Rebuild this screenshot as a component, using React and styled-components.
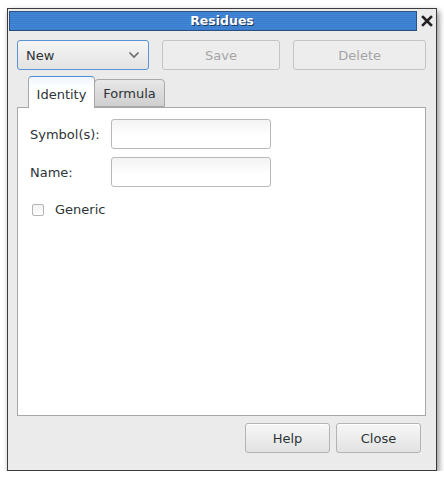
import React from "react";
import styled, { createGlobalStyle } from "styled-components";

const Global = createGlobalStyle`
  html, body {
    margin: 0;
    background: #ffffff;
  }
  body {
    font-family: "DejaVu Sans", "Noto Sans", sans-serif;
    font-size: 13px;
    color: #2e3436;
  }
`;

const Window = styled.div`
  margin: 8px 0 0 7px;
  width: 428px;
  height: 461px;
  border: 1px solid #3c3c3c;
  background: #ebebeb;
  box-shadow: 2px 3px 6px rgba(0, 0, 0, 0.45);
  display: flex;
  flex-direction: column;
`;

const TitleRow = styled.div`
  box-sizing: border-box;
  display: flex;
  align-items: center;
  padding: 1px 0 0 1px;
  height: 22px;
`;

const TitleBar = styled.div`
  box-sizing: border-box;
  width: 408px;
  height: 20px;
  border: 1px solid #2b4f7e;
  background: repeating-linear-gradient(
    to bottom,
    #4287d8 0px,
    #4287d8 1px,
    #3a7bca 1px,
    #3a7bca 2px
  );
  color: #ffffff;
  font-weight: bold;
  font-size: 12.5px;
  display: flex;
  align-items: center;
  justify-content: center;
  padding-left: 18px;
  text-shadow: 1px 1px 0 #1d3556;
`;

const CloseX = styled.div`
  width: 12px;
  height: 12px;
  margin-left: 4px;
  display: flex;
`;

const Body = styled.div`
  flex: 1;
  display: flex;
  flex-direction: column;
  padding: 9px 10px 17px 9px;
`;

const Toolbar = styled.div`
  display: flex;
  gap: 13px;
  height: 30px;
`;

const Button = styled.button`
  box-sizing: border-box;
  width: ${(p) => p.$w}px;
  height: 30px;
  border: 1px solid ${(p) => (p.$disabled ? "#c4c4c2" : "#b3b3b0")};
  border-radius: 3px;
  background: ${(p) =>
    p.$disabled ? "#ededed" : "linear-gradient(#f7f7f7, #e2e2e2)"};
  color: ${(p) => (p.$disabled ? "#a5a5a5" : "#2e3436")};
  font-family: "DejaVu Sans", sans-serif;
  font-size: 13px;
  padding: 0;
  box-shadow: ${(p) => (p.$disabled ? "none" : "inset 0 1px 0 #ffffff")};
`;

const Combo = styled.div`
  box-sizing: border-box;
  width: 132px;
  height: 30px;
  border: 1px solid #5a93d6;
  border-radius: 3px;
  background: linear-gradient(#f6f6f6, #e3e3e3);
  display: flex;
  align-items: center;
  justify-content: space-between;
  padding: 0 8px 0 8px;
`;

const Tabs = styled.div`
  display: flex;
  align-items: flex-end;
  margin: 6px 0 0 11px;
  height: 31px;
  position: relative;
  z-index: 1;
`;

const Tab = styled.div`
  box-sizing: border-box;
  height: ${(p) => (p.$active ? 32 : 28)}px;
  margin-bottom: ${(p) => (p.$active ? -1 : 0)}px;
  width: ${(p) => p.$w}px;
  border: 1px solid #a8a8a8;
  border-bottom: ${(p) => (p.$active ? "none" : "1px solid #a8a8a8")};
  border-top: 1px solid ${(p) => (p.$active ? "#4a90d9" : "#a8a8a8")};
  border-radius: 4px 4px 0 0;
  background: ${(p) =>
    p.$active ? "linear-gradient(#f0f6fc, #ffffff 40%)" : "linear-gradient(#e8e8e8, #cfcfcf)"};
  display: flex;
  align-items: center;
  justify-content: center;
  padding-top: ${(p) => (p.$active ? 3 : 0)}px;
  margin-left: ${(p) => (p.$active ? 0 : -1)}px;
`;

const Panel = styled.div`
  flex: 1;
  box-sizing: border-box;
  border: 1px solid #a8a8a8;
  background: #ffffff;
  padding: 11px 12px;
  display: flex;
  flex-direction: column;
  gap: 8px;
`;

const FieldRow = styled.div`
  display: flex;
  align-items: center;
`;

const Label = styled.div`
  width: 81px;
`;

const Input = styled.div`
  box-sizing: border-box;
  width: 160px;
  height: 30px;
  border: 1px solid #b8b8b6;
  border-radius: 3px;
  background: linear-gradient(#f3f3f3, #ffffff 60%);
`;

const CheckRow = styled.div`
  display: flex;
  align-items: center;
  margin-top: 7px;
  padding-left: 2px;
`;

const Box = styled.div`
  box-sizing: border-box;
  width: 12px;
  height: 12px;
  border: 1px solid #b4b4b4;
  border-radius: 2px;
  background: linear-gradient(#f2f2f2, #ffffff);
  margin-right: 11px;
`;

const Footer = styled.div`
  display: flex;
  justify-content: flex-end;
  gap: 6px;
  margin-top: 7px;
  padding-right: 5px;
`;

export default function App() {
  return (
    <>
      <Global />
      <Window>
        <TitleRow>
          <TitleBar>Residues</TitleBar>
          <CloseX>
            <svg width="12" height="12" viewBox="0 0 12 12">
              <path d="M2 2 L10 10 M10 2 L2 10" stroke="#222" strokeWidth="2.6" strokeLinecap="square" />
            </svg>
          </CloseX>
        </TitleRow>
        <Body>
          <Toolbar>
            <Combo>
              <span>New</span>
              <svg width="12" height="8" viewBox="0 0 12 8">
                <path d="M1.5 1.5 L6 6 L10.5 1.5" fill="none" stroke="#6a6a6a" strokeWidth="1.6" />
              </svg>
            </Combo>
            <Button $w={119} $disabled>Save</Button>
            <Button $w={133} $disabled>Delete</Button>
          </Toolbar>
          <Tabs>
            <Tab $active $w={67}>Identity</Tab>
            <Tab $w={71}>Formula</Tab>
          </Tabs>
          <Panel>
            <FieldRow>
              <Label>Symbol(s):</Label>
              <Input />
            </FieldRow>
            <FieldRow>
              <Label>Name:</Label>
              <Input />
            </FieldRow>
            <CheckRow>
              <Box />
              <span>Generic</span>
            </CheckRow>
          </Panel>
          <Footer>
            <Button $w={85}>Help</Button>
            <Button $w={85}>Close</Button>
          </Footer>
        </Body>
      </Window>
    </>
  );
}
